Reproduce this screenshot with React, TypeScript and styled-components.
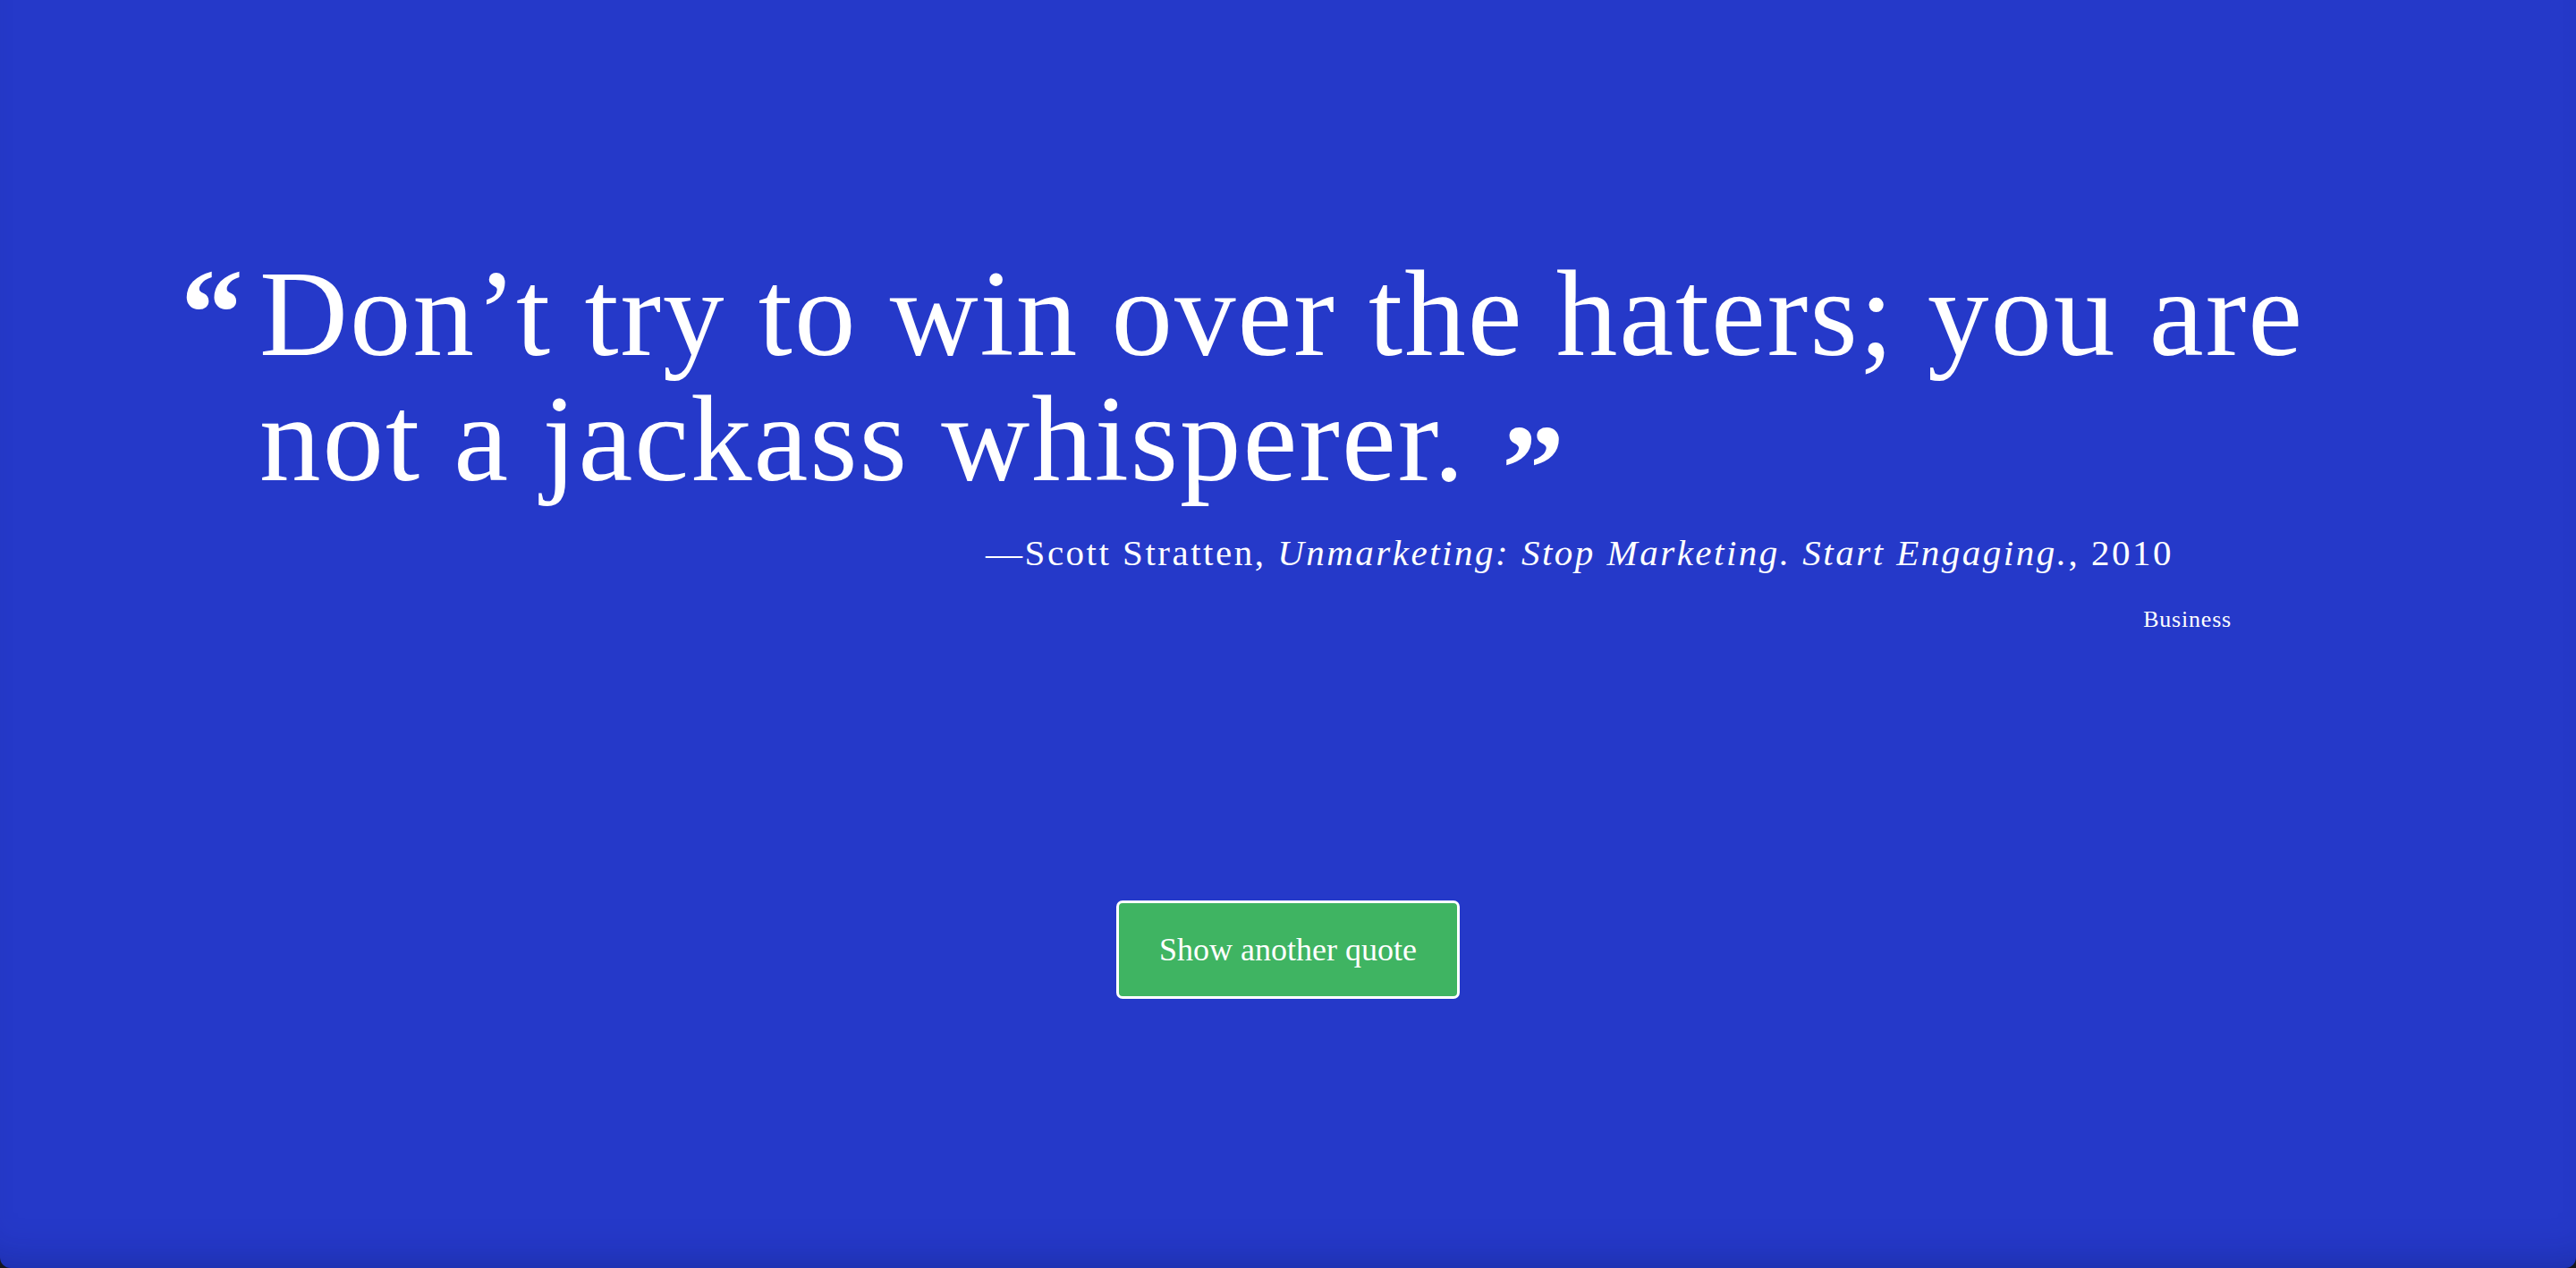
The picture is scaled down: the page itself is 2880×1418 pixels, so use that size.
import React from "react";
import styled, { createGlobalStyle } from "styled-components";

const GlobalStyle = createGlobalStyle`
  html, body {
    margin: 0;
    padding: 0;
    background: #14161f;
  }
  #root {
    min-height: 1418px;
  }
`;

const Page = styled.main`
  box-sizing: border-box;
  min-height: 1418px;
  background: #2539c9;
  border-radius: 0 0 12px 12px;
  box-shadow: inset 0 -40px 50px -40px rgba(10, 20, 80, 0.35);
  color: #ffffff;
  font-family: "Liberation Serif", "Times New Roman", serif;
  display: flex;
  flex-direction: column;
  padding-top: 281px;
`;

const Quote = styled.blockquote`
  margin: 0;
  padding: 0 220px 0 290px;
  font-size: 137px;
  line-height: 140px;
  font-weight: 400;
  letter-spacing: 2px;
  text-indent: -88px;
`;

const Mark = styled.span<{ $close?: boolean }>`
  display: inline-block;
  text-indent: 0;
  letter-spacing: 0;
  width: ${(p) => (p.$close ? "auto" : "88px")};
  margin-left: ${(p) => (p.$close ? "40px" : "0")};
  font-size: 140px;
  font-weight: 700;
  line-height: 0;
  vertical-align: ${(p) => (p.$close ? "-34px" : "0")};
`;

const Meta = styled.p<{ $size: number; $line: number; $inset: number; $gap: number; $spacing: number }>`
  margin: ${(p) => p.$gap}px 0 0;
  padding-right: ${(p) => p.$inset}px;
  text-align: right;
  font-size: ${(p) => p.$size}px;
  line-height: ${(p) => p.$line}px;
  letter-spacing: ${(p) => p.$spacing}px;
`;

const Title = styled.cite`
  font-style: italic;
`;

const Actions = styled.div`
  display: flex;
  justify-content: center;
  margin-top: 299px;
`;

const Button = styled.button`
  box-sizing: border-box;
  width: 384px;
  height: 110px;
  background: #3fb462;
  color: #ffffff;
  border: 3px solid #ffffff;
  border-radius: 7px;
  font-family: "Liberation Serif", "Times New Roman", serif;
  font-size: 36px;
  cursor: pointer;
`;

export default function App() {
  return (
    <>
      <GlobalStyle />
      <Page>
        <Quote>
          <Mark>“</Mark>Don’t try to win over the haters; you are not a jackass whisperer.
          <Mark $close>”</Mark>
        </Quote>
        <Meta $size={41} $line={50} $inset={450} $gap={32} $spacing={2.5}>
          —Scott Stratten, <Title>Unmarketing: Stop Marketing. Start Engaging.</Title>, 2010
        </Meta>
        <Meta $size={26} $line={30} $inset={385} $gap={35} $spacing={0.8}>
          Business
        </Meta>
        <Actions>
          <Button type="button">Show another quote</Button>
        </Actions>
      </Page>
    </>
  );
}
